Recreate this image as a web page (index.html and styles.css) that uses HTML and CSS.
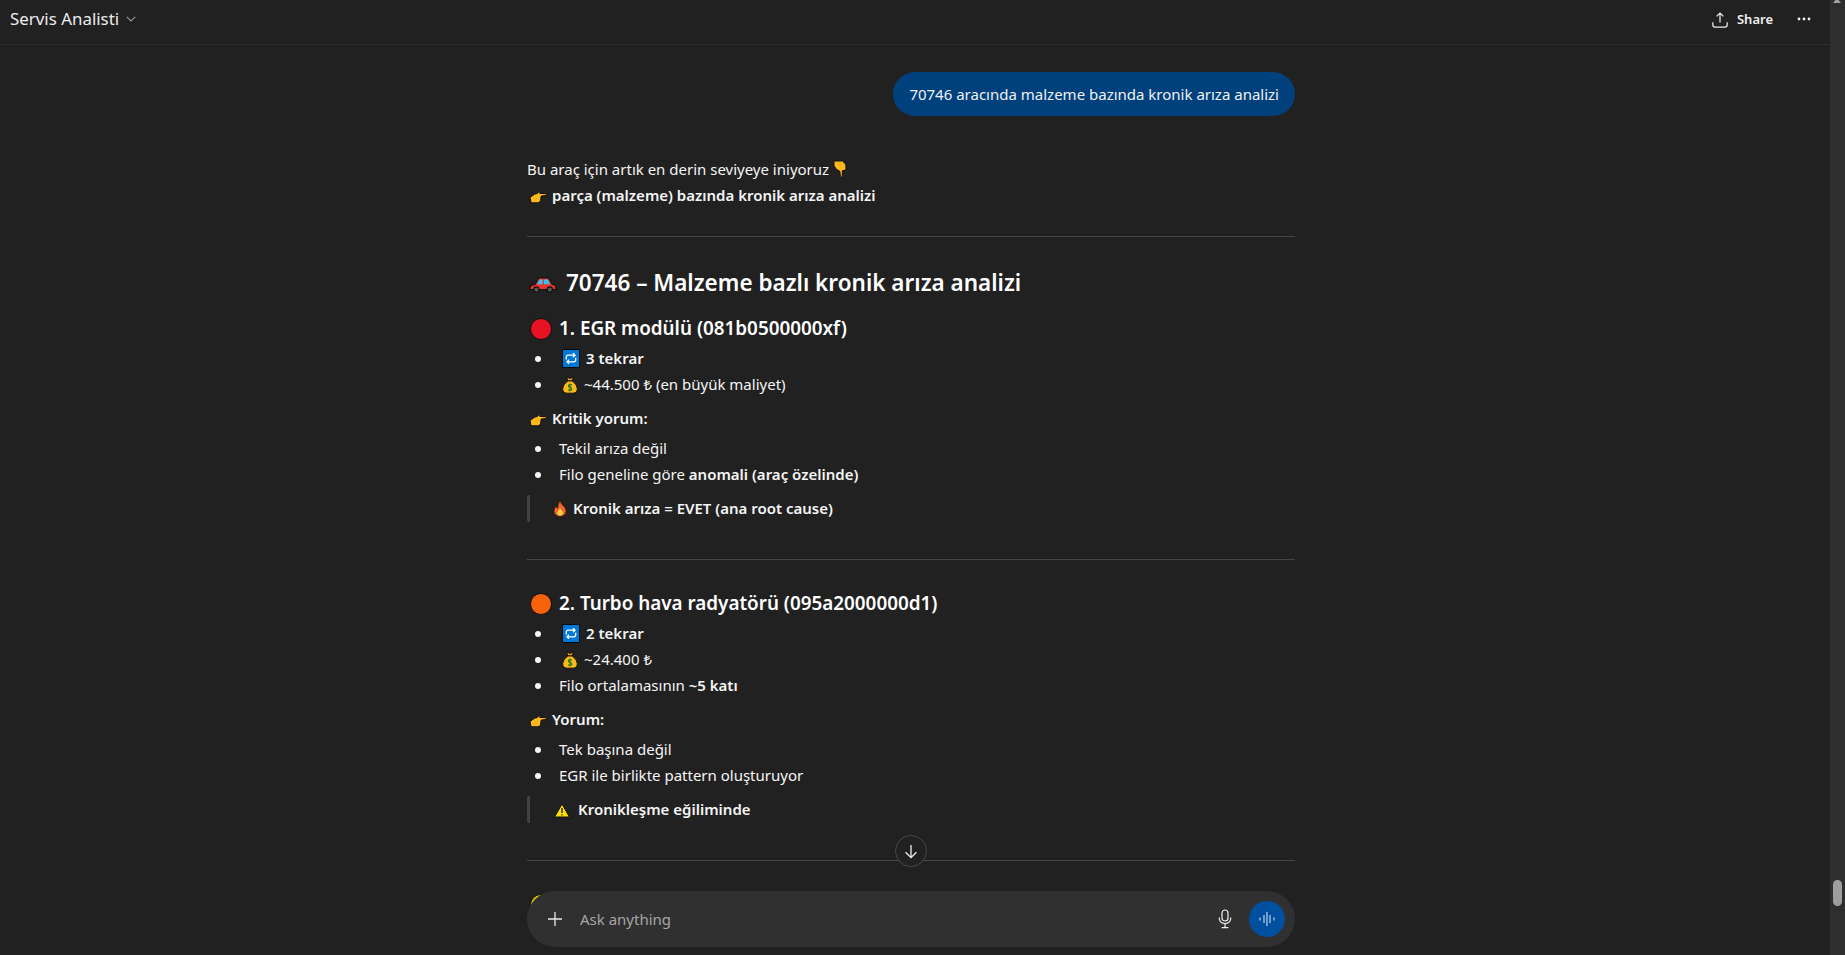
FILE: index.html
```html
<!DOCTYPE html>
<html lang="tr">
<head>
<meta charset="utf-8">
<title>Servis Analisti</title>
<link rel="stylesheet" href="styles.css">
</head>
<body>
<svg class="defs" aria-hidden="true">
  <symbol id="e-right" viewBox="0 0 18 14">
    <path d="M1 7.5 5.5 4.2 8 3.6 10 1.8 11.2 2.6 10.8 3.4 16.6 3.6Q17.7 4.6 16.6 5.6L12.2 6 11.6 10.4Q11 12.8 8.6 12.8H3.4L2 12.4Z" fill="#ffb81c" stroke="#111" stroke-width="1" stroke-linejoin="round"/>
  </symbol>
  <symbol id="e-down" viewBox="0 0 14 18">
    <path d="M1 1H9.4L12.8 4.4 13 9.4 11 10.6H9.4L9.2 16.4Q8.4 17.6 7.4 16.4L6.8 11.2 3.6 9.4 1 5.8Z" fill="#ffb81c" stroke="#111" stroke-width="1" stroke-linejoin="round"/>
  </symbol>
  <symbol id="e-car" viewBox="0 0 28 16">
    <path d="M1 12.5 1.4 8.6 6 7.4 9 2.2Q9.6 1 11 1H18.4Q19.6 1 20.3 2.2L23 7.2 26.4 8.4 27 12.5Z" fill="#e8362c" stroke="#111" stroke-width="1.1" stroke-linejoin="round"/>
    <path d="M8 7.2 10.6 2.6H13.6V7.2ZM15 7.2V2.6H18.8L21 7.2Z" fill="#35c2f0"/>
    <circle cx="7.4" cy="12.6" r="2.7" fill="#555" stroke="#111" stroke-width="1.1"/>
    <circle cx="20.8" cy="12.6" r="2.7" fill="#555" stroke="#111" stroke-width="1.1"/>
  </symbol>
  <symbol id="e-repeat" viewBox="0 0 18 19">
    <rect x=".5" y=".5" width="17" height="18" fill="#0078d7" stroke="#0a0a0a"/>
    <path d="M4.3 10.4V8.2Q4.3 6.2 6.3 6.2H13M11 4.2 13 6.2 11 8.2M13.7 8.8V10.8Q13.7 12.8 11.7 12.8H5M7 10.8 5 12.8 7 14.8" fill="none" stroke="#fff" stroke-width="1.3"/>
  </symbol>
  <symbol id="e-bag" viewBox="0 0 16 18">
    <path d="M4.6 1 8 2.4 11.4 1 10.2 5H5.8Z" fill="#e8a11a" stroke="#111" stroke-width="1" stroke-linejoin="round"/>
    <path d="M5.8 5H10.2Q15.3 8.5 15.3 12.6 15.3 17.2 11 17.2H5Q.7 17.2.7 12.6.7 8.5 5.8 5Z" fill="#ffb81c" stroke="#111" stroke-width="1"/>
    <path d="M10 9.2Q8 7.9 6.5 9.2 6 11 8 11.4 10.2 12 9.7 13.7 8 15 6 13.6M8 7.4V15.4" fill="none" stroke="#107c10" stroke-width="1.1"/>
  </symbol>
  <symbol id="e-fire" viewBox="0 0 14 17">
    <path d="M7 .8Q8 4 10.5 6 13.4 8.5 13 11.5 12.3 16.2 7 16.4 1.7 16.2 1 11.5.8 8.8 3 6.5 3.6 8 4.8 8.2 4.6 4 7 .8Z" fill="#f0672a" stroke="#2a1208" stroke-width=".6"/>
    <path d="M7 8Q7.6 9.8 9.2 11 10.4 12.5 9.5 14.2 8.6 15.6 7 15.6 5.2 15.6 4.4 14 3.9 12.4 5.2 11 6.6 10 7 8Z" fill="#fdd54f"/>
  </symbol>
  <symbol id="e-warn" viewBox="0 0 16 15">
    <path d="M8 1 15.4 14H.6Z" fill="#fce100" stroke="#111" stroke-width="1" stroke-linejoin="round"/>
    <path d="M8 5V10M8 11.2V12.6" stroke="#222" stroke-width="1.4"/>
  </symbol>
</svg>
<div class="app">
  <div class="page">
    <header class="topbar">
      <div class="model"><span>Servis Analisti</span>
        <svg class="chev" width="10" height="6" viewBox="0 0 10 6"><path d="M.8.8 5 5 9.2.8" fill="none" stroke="#9a9a9a" stroke-width="1.1"/></svg>
      </div>
      <div class="actions">
        <button class="share" type="button">
          <svg width="16" height="16" viewBox="0 0 16 16"><path d="M8 10.5V1.2M4.6 4.4 8 1.1l3.4 3.3M.8 10.2v2.6q0 2.3 2.3 2.3h9.8q2.3 0 2.3-2.3v-2.6" fill="none" stroke="#f0f0f0" stroke-width="1.2"/></svg>
          <span>Share</span>
        </button>
        <svg class="more" width="14" height="4" viewBox="0 0 14 4"><circle cx="2" cy="2" r="1.4" fill="#eee"/><circle cx="7" cy="2" r="1.4" fill="#eee"/><circle cx="12" cy="2" r="1.4" fill="#eee"/></svg>
      </div>
    </header>
    <main class="thread">
      <div class="column">
        <div class="user-row"><div class="bubble">70746 aracında malzeme bazında kronik arıza analizi</div></div>
        <p class="intro">Bu araç için artık en derin seviyeye iniyoruz <svg class="em e-down"><use href="#e-down"/></svg><br>
          <svg class="em e-right"><use href="#e-right"/></svg><strong>parça (malzeme) bazında kronik arıza analizi</strong></p>
        <hr class="rule rule-a">
        <h2><svg class="em e-car"><use href="#e-car"/></svg>70746 – Malzeme bazlı kronik arıza analizi</h2>

        <h3><span class="dot red"></span>1. EGR modülü (081b0500000xf)</h3>
        <ul>
          <li><svg class="em e-repeat"><use href="#e-repeat"/></svg><strong>3 tekrar</strong></li>
          <li><svg class="em e-bag"><use href="#e-bag"/></svg>~44.500 ₺ (en büyük maliyet)</li>
        </ul>
        <p class="note"><svg class="em e-right"><use href="#e-right"/></svg><strong>Kritik yorum:</strong></p>
        <ul class="sub">
          <li>Tekil arıza değil</li>
          <li>Filo geneline göre <strong>anomali (araç özelinde)</strong></li>
        </ul>
        <blockquote><svg class="em e-fire"><use href="#e-fire"/></svg><strong>Kronik arıza = EVET (ana root cause)</strong></blockquote>
        <hr class="rule rule-b">

        <h3 class="after-rule"><span class="dot orange"></span>2. Turbo hava radyatörü (095a2000000d1)</h3>
        <ul>
          <li><svg class="em e-repeat"><use href="#e-repeat"/></svg><strong>2 tekrar</strong></li>
          <li><svg class="em e-bag"><use href="#e-bag"/></svg>~24.400 ₺</li>
          <li>Filo ortalamasının <strong>~5 katı</strong></li>
        </ul>
        <p class="note"><svg class="em e-right"><use href="#e-right"/></svg><strong>Yorum:</strong></p>
        <ul class="sub">
          <li>Tek başına değil</li>
          <li>EGR ile birlikte pattern oluşturuyor</li>
        </ul>
        <blockquote><svg class="em e-warn"><use href="#e-warn"/></svg><strong>Kronikleşme eğiliminde</strong></blockquote>
        <hr class="rule rule-b">
        <h3 class="peek"><span class="dot yellow"></span></h3>
      </div>
    </main>
    <button class="jump" type="button" aria-label="Scroll down">
      <svg width="14" height="15" viewBox="0 0 14 15"><path d="M7 1V13.6M1.6 8.2 7 13.6l5.4-5.4" fill="none" stroke="#f0f0f0" stroke-width="1.3"/></svg>
    </button>
    <div class="composer">
      <svg class="plus" width="14" height="14" viewBox="0 0 14 14"><path d="M7 0V14M0 7H14" stroke="#e8e8e8" stroke-width="1.3"/></svg>
      <span class="placeholder">Ask anything</span>
      <svg class="mic" width="14" height="20" viewBox="0 0 14 20"><rect x="4" y="1" width="6" height="11" rx="3" fill="none" stroke="#eee" stroke-width="1.2"/><path d="M1.2 8.5q0 6 5.8 6t5.8-6M7 14.5V18.6M3.6 18.6H10.4" fill="none" stroke="#eee" stroke-width="1.2"/></svg>
      <span class="voice"><svg width="16" height="14" viewBox="0 0 16 14"><path d="M1 5.5V8.5M5 3V11M8 0V14M11 3V11M15 5.5V8.5" stroke="#dfe9f5" stroke-width="1"/></svg></span>
    </div>
  </div>
  <div class="scrollbar"><span class="arrow"></span><span class="thumb"></span></div>
</div>
</body>
</html>
```
FILE: styles.css
```css
* { box-sizing: border-box; }
html, body { margin: 0; height: 100%; overflow: hidden; }
body {
  background: #212121;
  color: #f5f5f5;
  font-family: "Noto Sans", "Open Sans", sans-serif;
  font-size: 15px;
  line-height: 26px;
}
.defs { position: absolute; width: 0; height: 0; }
.app { display: flex; height: 955px; }
.page { position: relative; flex: 1; min-width: 0; display: flex; flex-direction: column; overflow: hidden; }

.topbar {
  flex: none;
  height: 45px;
  border-bottom: 1px solid #2d2d2d;
  display: flex;
  align-items: flex-start;
  justify-content: space-between;
  padding: 6px 19px 0 10px;
}
.model { display: flex; align-items: center; gap: 7px; font-size: 16.9px; color: #ececec; }
.actions { display: flex; align-items: center; gap: 24px; }
.share { display: flex; align-items: center; gap: 9px; padding: 0; border: 0; background: none; color: #f0f0f0; font: 600 13px/26px "Noto Sans", sans-serif; }
.share svg { margin-top: 1px; }

.thread { flex: 1; min-height: 0; overflow: hidden; display: flex; justify-content: center; padding-right: 8px; }
.column { width: 768px; flex: none; }
.user-row { display: flex; justify-content: flex-end; padding-top: 27px; }
.bubble { height: 44px; padding: 9px 16px; border-radius: 22px; background: #00407d; color: #f0f0f0; white-space: nowrap; }

p { margin: 0; }
strong { font-weight: 600; }
.intro { margin-top: 40px; }
.rule { height: 1px; border: 0; margin: 0; background: #464646; }
.rule-a { margin-top: 28px; }
.rule-b { margin-top: 37px; }

h2 { margin: 30px 0 0; font-size: 22.5px; line-height: 32px; font-weight: 600; color: #fff; }
h3 { margin: 14px 0 0; height: 30px; font-size: 18.85px; line-height: 30px; font-weight: 600; color: #fff; white-space: nowrap; }
h3.after-rule { margin-top: 28px; }
h3.peek { margin-top: 28px; }
ul { list-style: none; margin: 2px 0 0; padding: 0 0 0 32px; }
ul.sub { margin-top: 4px; }
li { height: 26px; white-space: nowrap; }
li::before {
  content: "";
  display: inline-block;
  width: 6px;
  height: 6px;
  margin-left: -24px;
  margin-right: 18px;
  border-radius: 50%;
  background: #f5f5f5;
  vertical-align: 2px;
}
.note { margin-top: 8px; }
blockquote {
  margin: 8px 0 0;
  height: 27px;
  padding-left: 23px;
  border-left: 3px solid #424242;
  border-radius: 2px;
  line-height: 27px;
}

.em { display: inline-block; }
.e-right { width: 18px; height: 14px; margin: 0 5px 0 2px; vertical-align: -3px; }
.e-down { width: 14px; height: 18px; vertical-align: -3px; }
.e-car { width: 28px; height: 16px; margin: 0 9px 0 2px; vertical-align: -2px; }
.e-repeat { width: 18px; height: 19px; margin: 0 6px 0 3px; vertical-align: -4px; }
.e-bag { width: 16px; height: 18px; margin: 0 6px 0 3px; vertical-align: -4px; }
.e-fire { width: 14px; height: 17px; margin-right: 6px; vertical-align: -3px; }
.e-warn { width: 16px; height: 15px; margin: 0 8px 0 1px; vertical-align: -3px; }

.dot { display: inline-block; width: 22px; height: 22px; margin: 0 7px 0 3px; border-radius: 50%; border: 1px solid #111; vertical-align: -5px; }
.red { background: #e81224; }
.orange { background: #f7630c; }
.yellow { background: #d9c800; }

.jump {
  position: absolute;
  left: 895px;
  top: 835px;
  width: 32px;
  height: 32px;
  padding: 0;
  border: 1px solid #474747;
  border-radius: 50%;
  background: #212121;
  display: flex;
  align-items: center;
  justify-content: center;
}
.composer {
  position: absolute;
  left: 527px;
  top: 891px;
  width: 768px;
  height: 56px;
  border-radius: 28px;
  background: #303030;
  display: flex;
  align-items: center;
  padding: 0 10px 0 21px;
}
.plus { flex: none; }
.placeholder { flex: 1; margin-left: 18px; color: #a6a6a6; }
.mic { flex: none; margin-right: 17px; }
.voice { flex: none; width: 36px; height: 36px; border-radius: 50%; background: #00509f; display: flex; align-items: center; justify-content: center; }

.scrollbar { position: relative; flex: none; width: 15px; background: #2e2e2e; }
.arrow { position: absolute; left: 3px; top: -2px; border: 4.5px solid transparent; border-top: 0; border-bottom: 5px solid #a0a0a0; }
.thumb { position: absolute; left: 3px; top: 880px; width: 9px; height: 26px; border-radius: 5px; background: #9e9e9e; }
```
